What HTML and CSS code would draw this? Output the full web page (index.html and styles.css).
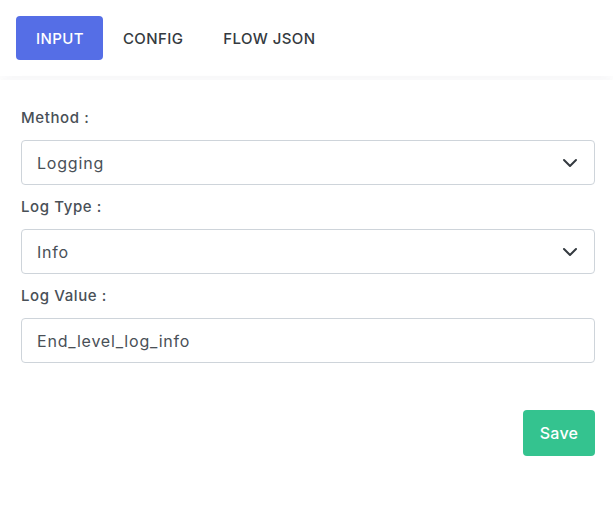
FILE: index.html
```html
<!DOCTYPE html>
<html>
<head>
<meta charset="utf-8">
<link rel="stylesheet" href="styles.css">
</head>
<body>
<div class="tabs">
  <div class="tab active">INPUT</div>
  <div class="tab">CONFIG</div>
  <div class="tab">FLOW JSON</div>
</div>
<div class="card">
  <div class="field">
    <label class="label">Method :</label>
    <div class="control">
      <span>Logging</span>
      <svg class="chev" width="16" height="10" viewBox="0 0 16 10"><path d="M2 2 L8 8 L14 2" fill="none" stroke="#343a40" stroke-width="2" stroke-linecap="round" stroke-linejoin="round"/></svg>
    </div>
  </div>
  <div class="field">
    <label class="label">Log Type :</label>
    <div class="control">
      <span>Info</span>
      <svg class="chev" width="16" height="10" viewBox="0 0 16 10"><path d="M2 2 L8 8 L14 2" fill="none" stroke="#343a40" stroke-width="2" stroke-linecap="round" stroke-linejoin="round"/></svg>
    </div>
  </div>
  <div class="field">
    <label class="label">Log Value :</label>
    <div class="control">
      <span>End_level_log_info</span>
    </div>
  </div>
  <div class="actions">
    <button class="save">Save</button>
  </div>
</div>
</body>
</html>
```

FILE: styles.css
```css
html, body {
  margin: 0;
  padding: 0;
  background: #ffffff;
  font-family: "Inter", "Open Sans", sans-serif;
  color: #495057;
}
.tabs {
  display: flex;
  padding: 16px 16px 16px 16px;
  box-shadow: 0 6px 12px rgba(18, 38, 63, 0.03);
}
.tab {
  height: 44px;
  padding: 0 20px;
  display: flex;
  align-items: center;
  font-size: 15px;
  font-weight: 500;
  color: #343a40;
  border-radius: 4px;
  letter-spacing: 0.4px;
}
.tab.active {
  background: #556ee6;
  color: #ffffff;
  padding: 0 19px 0 20px;
}
.card {
  margin-top: 4px;
  padding: 26px 18px 11px 21px;
  background: #fff;
  box-shadow: 0 14px 24px rgba(18, 38, 63, 0.06);
}
.field {
  display: flex;
  flex-direction: column;
}
.label {
  font-size: 15px;
  font-weight: 500;
  line-height: 20px;
  height: 20px;
  margin-top: 2px;
  margin-bottom: 12px;
  color: #495057;
  letter-spacing: 0.6px;
}
.control {
  height: 43px;
  border: 1px solid #ced4da;
  border-radius: 4px;
  display: flex;
  align-items: center;
  justify-content: space-between;
  padding: 0 15px;
  font-size: 16px;
  color: #495057;
  margin-bottom: 10px;
  letter-spacing: 0.8px;
}
.chev {
  display: block;
  margin-right: 1px;
}
.actions {
  display: flex;
  justify-content: flex-end;
  margin-top: 37px;
}
.save {
  width: 72px;
  height: 46px;
  border: none;
  border-radius: 4px;
  background: #34c38f;
  color: #fff;
  font-family: inherit;
  font-size: 16px;
  font-weight: 500;
  letter-spacing: 0.3px;
}
```
